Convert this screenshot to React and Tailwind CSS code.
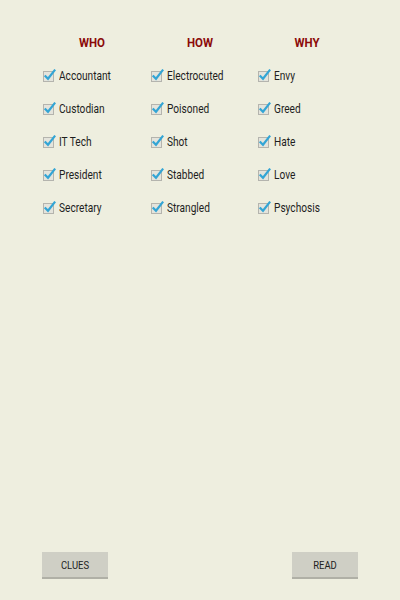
import React from 'react';

const columns = [
    { title: 'WHO', items: ['Accountant', 'Custodian', 'IT Tech', 'President', 'Secretary'] },
    { title: 'HOW', items: ['Electrocuted', 'Poisoned', 'Shot', 'Stabbed', 'Strangled'] },
    { title: 'WHY', items: ['Envy', 'Greed', 'Hate', 'Love', 'Psychosis'] },
];

function CheckIcon() {
    return (
        <svg width="13" height="13" viewBox="0 0 13 13" className="shrink-0">
            <rect x="0.5" y="2.5" width="10" height="10" fill="#e4e4dc" stroke="#b4b4ae" />
            <path d="M2.5 7.2 L5 9.8 L11.5 1.5" fill="none" stroke="#33a5d5" strokeWidth="2.2" strokeLinecap="square" />
        </svg>
    );
}

function CheckRow({ label }) {
    return (
        <div className="flex items-center h-[33px]">
            <CheckIcon />
            <span className="ml-[3px] text-[13.5px] text-[#1e1e1e] origin-left scale-x-[0.75] whitespace-nowrap">{label}</span>
        </div>
    );
}

export default function App() {
    return (
        <div className="w-[400px] h-[600px] bg-[#eeeedf] flex flex-col" style={{ fontFamily: 'Roboto, "Liberation Sans", sans-serif' }}>
            <div className="flex pl-[43px] pt-[33px]">
                {columns.map((col) => (
                    <div key={col.title} className="w-[107.5px]">
                        <div className="w-[98px] text-center text-[13.5px] font-bold text-[#8b0a0a] h-[18px] leading-[18px] scale-x-[0.85]">
                            {col.title}
                        </div>
                        <div className="mt-[8px]">
                            {col.items.map((it) => (
                                <CheckRow key={it} label={it} />
                            ))}
                        </div>
                    </div>
                ))}
            </div>
            <div className="mt-auto flex justify-between px-[42px] pb-[21px]">
                <button className="w-[66px] h-[27px] bg-[#cfcfc5] border-b-2 border-[#b0b0a6] text-[#222] pt-[3px]">
                    <span className="block text-[11.5px] scale-x-[0.82]">CLUES</span>
                </button>
                <button className="w-[66px] h-[27px] bg-[#cfcfc5] border-b-2 border-[#b0b0a6] text-[#222] pt-[3px]">
                    <span className="block text-[11.5px] scale-x-[0.82]">READ</span>
                </button>
            </div>
        </div>
    );
}
